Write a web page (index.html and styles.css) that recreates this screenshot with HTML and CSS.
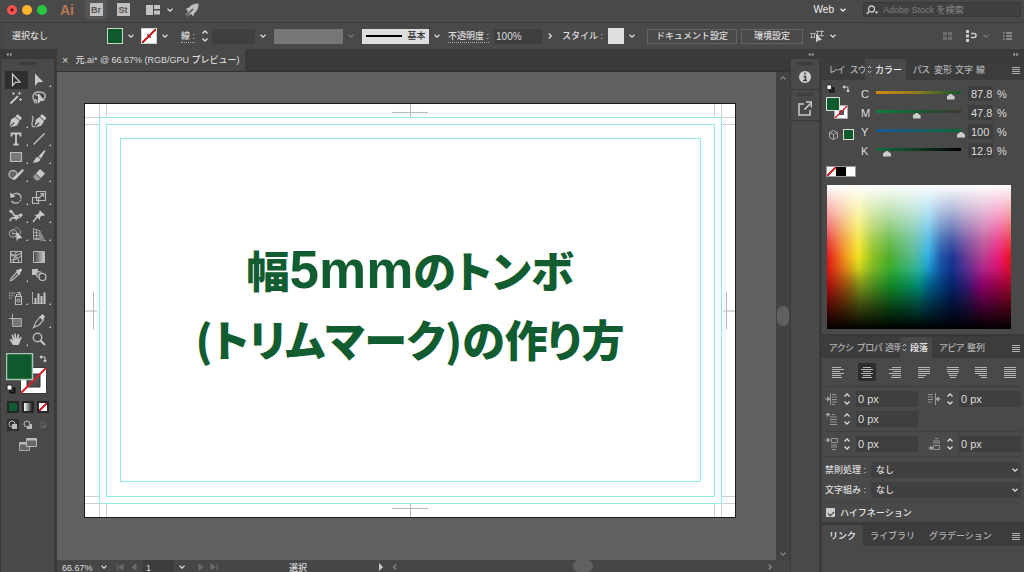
FILE: index.html
```html
<!DOCTYPE html>
<html lang="ja">
<head>
<meta charset="utf-8">
<title>元.ai</title>
<meta name="viewport" content="width=device-width">
<link rel="stylesheet" href="styles.css">
</head>
<body>
<svg class="sprite" aria-hidden="true">
  <symbol id="down" viewBox="0 0 8 8"><path d="M1.5 2.7 4 5.2l2.500-2.500" fill="none" stroke="currentColor" stroke-width="1.300"/></symbol>
  <symbol id="right" viewBox="0 0 8 8"><path d="M2.800 1.500 5.300 4 2.800 6.500" fill="none" stroke="currentColor" stroke-width="1.300"/></symbol>
  <symbol id="updown" viewBox="0 0 8 14"><path d="M1.500 4.500 4 2l2.500 2.500M1.500 9.500 4 12l2.500-2.500" fill="none" stroke="currentColor" stroke-width="1.300"/></symbol>
  <symbol id="menu" viewBox="0 0 8 8"><path d="M0 1.500h8M0 3.500h8M0 5.500h8M0 7.500h8" stroke="currentColor"/></symbol>
  <symbol id="swap" viewBox="0 0 10 10"><path d="M2.500 2.500h4q1 0 1 1v4" fill="none" stroke="currentColor" stroke-width="1.200"/><path d="M3.500 0v5L.5 2.500zM5 6.500h5L7.500 9.500z" fill="currentColor"/></symbol>
  <symbol id="default" viewBox="0 0 10 10"><path d="M4.500 4.500h4v4h-4z" fill="none" stroke="#111" stroke-width="2"/><path d="M1 1h5v5H1z" fill="#fff" stroke="#222"/></symbol>
</svg>

<div class="app">
  <header class="titlebar">
    <div class="lights"><i class="light red"></i><i class="light yellow"></i><i class="light green"></i></div>
    <span class="logo">Ai</span>
    <button class="bridge active">Br</button>
    <button class="bridge">St</button>
    <button class="icon arrange" aria-label="ドキュメントの配置"><svg width="14" height="10" viewBox="0 0 14 10"><path d="M0 0h7v10H0zM8 0h6v4H8zM8 5.500h6v4H8z" fill="#c4c4c4"/></svg><svg class="chev"><use href="#down"/></svg></button>
    <button class="icon" aria-label="GPU"><svg width="14" height="14" viewBox="0 0 14 14"><path d="M13.500.5C9 .5 6 2 4 4.500L.5 6 3 7.500 2 9l3 3 1.500-1L8 13.500 9.500 10c3-2 4-5 4-9.500z" fill="#bcbcbc"/><path d="M1 13 8 6" stroke="#494949" stroke-width="1.200"/><path d="m.5 12 2-2M2 13.500l2-2" stroke="#bcbcbc"/></svg></button>
    <div class="title-right">
      <button class="workspace">Web <svg class="chev"><use href="#down"/></svg></button>
      <label class="search"><svg width="13" height="10" viewBox="0 0 13 10"><circle cx="5.500" cy="4" r="3" fill="none" stroke="#ccc" stroke-width="1.300"/><path d="M3.500 6.200 .8 9" stroke="#ccc" stroke-width="1.500"/><path d="M8.500 6.500h4L10.500 8.800z" fill="#ccc"/></svg><input type="text" placeholder="Adobe Stock を検索" aria-label="Adobe Stock を検索"></label>
    </div>
  </header>

  <div class="control">
    <span class="selection">選択なし</span>
    <div class="pair fill-pair"><button class="swatch solid" aria-label="塗り"></button><button class="drop" aria-label="塗りメニュー"><svg class="chev"><use href="#down"/></svg></button></div>
    <div class="pair"><button class="swatch none" aria-label="線の色"></button><button class="drop" aria-label="線メニュー"><svg class="chev"><use href="#down"/></svg></button></div>
    <div class="pair stroke-pair"><label class="underlined" for="stroke">線 :</label><button class="step" aria-label="増減"><svg width="8" height="14"><use href="#updown"/></svg></button><input class="field" id="stroke" type="text"><button class="drop" aria-label="線幅"><svg class="chev"><use href="#down"/></svg></button></div>
    <div class="pair dim"><span class="profile"></span><button class="drop" disabled aria-label="プロファイル"><svg class="chev"><use href="#down"/></svg></button></div>
    <div class="pair"><button class="brush"><i></i>基本</button><button class="drop" aria-label="ブラシ"><svg class="chev"><use href="#down"/></svg></button></div>
    <div class="pair opacity"><label class="underlined" for="opacity">不透明度 :</label><input class="field" id="opacity" type="text" value="100%"><button class="drop" aria-label="不透明度を変更"><svg class="chev"><use href="#right"/></svg></button></div>
    <div class="pair style-pair"><span>スタイル :</span><button class="swatch pale" aria-label="スタイル"></button><button class="drop" aria-label="スタイルメニュー"><svg class="chev"><use href="#down"/></svg></button></div>
    <div class="pair buttons"><button class="outlined">ドキュメント設定</button><button class="outlined">環境設定</button></div>
    <button class="icon" aria-label="類似オブジェクト"><svg width="14" height="13" viewBox="0 0 14 13"><path d="M1.500 3.500h3v4h-3zM7.500 1.500h4v4h-4zM0 3.500h6M0 7.500h5M6 1.500h8M6 5.500h8M7.500 0v5M11.500 0v7" fill="none" stroke="#aaa"/><path d="M6 3.500v9l2.200-2L12 10z" fill="#ccc"/></svg><svg class="chev"><use href="#down"/></svg></button>
    <div class="control-right">
      <svg width="9" height="8" viewBox="0 0 9 8"><path d="M0 0h4v3.500H0zM5 0h4v3.500H5zM0 4.500h4V8H0zM5 4.500h4V8H5z" fill="#6c6c6c"/></svg>
      <button class="icon" aria-label="整列"><svg width="12" height="12" viewBox="0 0 12 12"><path d="M1 0h3v3H1zM1 4.500h3v3H1zM1 9h3v3H1z" fill="#ccc"/><path d="M6 3.500h3q2 0 2 2t-2 2H6" fill="none" stroke="#ccc" stroke-width="1.500"/></svg><svg class="chev faint"><use href="#down"/></svg></button>
      <button class="icon" aria-label="コントロールメニュー"><svg width="9" height="8" viewBox="0 0 9 8"><path d="M0 1h1.500M3 1h6M0 4h1.500M3 4h6M0 7h1.500M3 7h6" stroke="#c4c4c4" stroke-width="1.200"/></svg></button>
    </div>
  </div>

  <main class="workspace-body">
    <aside class="toolcol">
      <div class="collapse"><svg width="6" height="5" viewBox="0 0 6 5"><path d="M2.500.5v4L.5 2.500zM5.500.5v4l-2-2z" fill="#aaa"/></svg></div>
      <div class="toolpanel">
        <i class="grip"></i>
        <div class="toolgroup">
          <button class="tool on" aria-label="選択"><svg viewBox="0 0 18 18"><path d="M5.500 3v11.500l3-3.200 4.500-.3z" fill="none" stroke="#d0d0d0" stroke-width="1.200"/></svg></button>
          <button class="tool more" aria-label="ダイレクト選択"><svg viewBox="0 0 18 18"><path d="M5 2.500V15l3.200-3.700 5-.3z" fill="#c8c8c8"/></svg></button>
          <button class="tool" aria-label="自動選択"><svg viewBox="0 0 18 18"><path d="M3.500 14.500 11 7" stroke="#c8c8c8" stroke-width="2"/><path d="M12.500 2.500v3.500M10.800 4.200h3.500M6.500 3v3M5 4.500h3M13.500 9v3M12 10.500h3" stroke="#b4b4b4"/></svg></button>
          <button class="tool" aria-label="なげなわ"><svg viewBox="0 0 18 18"><path d="M5.500 12C1.500 10 2 3 9 3c6.500 0 7.500 4 5 7M5 13.500c-2-1.500 0-3.500 1.500-2.500s-.5 3-1 3.500M5.500 6h5" fill="none" stroke="#b8b8b8" stroke-width="1.400"/><path d="M8 4.500v10.500l2.500-3 4.500-.5z" fill="#ccc"/></svg></button>
        </div>
        <div class="toolgroup">
          <button class="tool more" aria-label="ペン"><svg viewBox="0 0 18 18"><path d="m10.500 2 4.500 4-2 2.500-4.500-4zM8 5l4.500 4-2.500 4.500L3 15.500 7.500 11l-1-.8L2.500 14.500 4 7.500z" fill="#c8c8c8"/></svg></button>
          <button class="tool" aria-label="曲線"><svg viewBox="0 0 18 18"><path d="m12 2 4.500 4-2 2.500-4.500-4zM9.500 5l4.500 4-2.500 4.500-6 2L9.500 11l-1-.8L4.500 14 6 7.500z" fill="#c8c8c8"/><path d="M2 4c3 3-1 6 0 9 .5 2 2 2 3.500 1.500" fill="none" stroke="#b8b8b8" stroke-width="1.200"/></svg></button>
          <button class="tool more" aria-label="文字"><svg viewBox="0 0 18 18"><path d="M4.500 6.500v-3h9v3M9 3.500v11M6.500 14.500h5" fill="none" stroke="#c8c8c8" stroke-width="1.800"/></svg></button>
          <button class="tool more" aria-label="直線"><svg viewBox="0 0 18 18"><path d="m3.500 14.500 11-11" stroke="#c8c8c8" stroke-width="1.300"/></svg></button>
          <button class="tool more" aria-label="長方形"><svg viewBox="0 0 18 18"><path d="M3.500 4.500h11v9h-11z" fill="#777" stroke="#b8b8b8" stroke-width="1.200"/></svg></button>
          <button class="tool more" aria-label="ブラシ"><svg viewBox="0 0 18 18"><path d="m14.500 2 1 1L11 10.500 8.500 8.500zM8 9l2.500 2.300C9 15 5 14.500 2.500 14.800 5 13 4.500 9.500 8 9z" fill="#c8c8c8"/></svg></button>
          <button class="tool more" aria-label="Shaper"><svg viewBox="0 0 18 18"><circle cx="6" cy="8.500" r="4" fill="#666" stroke="#b0b0b0" stroke-width="1.400"/><path d="m15.500 3 1.500 1.500-8 8.500-3.500 1.500L7 11z" fill="#ccc"/></svg></button>
          <button class="tool more" aria-label="消しゴム"><svg viewBox="0 0 18 18"><path d="m10 3 5 4.500-4 4.500-5-4.500z" fill="#c8c8c8"/><path d="m5.500 8 5 4.500-2 2H6L3.500 12v-2z" fill="#999"/></svg></button>
        </div>
        <div class="toolgroup">
          <button class="tool more" aria-label="回転"><svg viewBox="0 0 18 18"><path d="M5 7c2-4 9-3.500 9 2 0 5-6.500 7-9.500 3" fill="none" stroke="#b8b8b8" stroke-width="1.400" stroke-dasharray="13 1 2 1"/><path d="M3 3.500 3.500 9l5-1.500z" fill="#c8c8c8"/></svg></button>
          <button class="tool more" aria-label="拡大・縮小"><svg viewBox="0 0 18 18"><path d="M6.500 2.500h9v9h-9zM2.500 8.500h6v6h-6zM9 9l4-4M10 4.500h3.500V8" fill="none" stroke="#b8b8b8" stroke-width="1.200"/></svg></button>
          <button class="tool more" aria-label="線幅"><svg viewBox="0 0 18 18"><path d="M2.500 5C7 3 5 9 9 9s4-2 6-1M3 14c1-6 5-1 8-4" fill="none" stroke="#b8b8b8" stroke-width="2"/><path d="M7 7.500 9 14l1.500-2.500 3.500-.5zM2 3h3v3zM13 6l3 2-3 3z" fill="#c8c8c8"/></svg></button>
          <button class="tool more" aria-label="ピン"><svg viewBox="0 0 18 18"><path d="m9.500 3 5.500 5-1.500 1-1.500-.5-2 2v2.500L4.500 8 7 7.800l2.300-2z" fill="#c8c8c8"/><path d="m7 10-4 5" stroke="#c8c8c8" stroke-width="1.500"/></svg></button>
          <button class="tool more" aria-label="シェイプ形成"><svg viewBox="0 0 18 18"><circle cx="6" cy="8.500" r="3.800" fill="none" stroke="#aaa"/><circle cx="9.500" cy="7" r="4.200" fill="none" stroke="#aaa" stroke-dasharray="2 1"/><path d="M5 8.500h7" stroke="#aaa"/><path d="M9.500 7v9l2-2.500 4-.5z" fill="#ccc"/></svg></button>
          <button class="tool more" aria-label="遠近グリッド"><svg viewBox="0 0 18 18"><path d="M3.500 3v11L16 15.500" fill="none" stroke="#aaa"/><path d="M3 3.500 10 6v7l-6.500 1M3.500 7 10 8.500M3.500 10.500H10M6.500 4v9.500" fill="none" stroke="#aaa"/><path d="M10 6v8.500h5z" fill="#888"/></svg></button>
        </div>
        <div class="toolgroup">
          <button class="tool" aria-label="メッシュ"><svg viewBox="0 0 18 18"><path d="M3.500 3.500h11v11h-11zM3.500 7q4 3 6-3.500M3.500 12q7 0 11-5M7 14.500Q5 8 14.500 5M12 14.500q-1-6-8-9" fill="none" stroke="#b8b8b8" stroke-width="1.100"/></svg></button>
          <button class="tool" aria-label="グラデーション"><svg viewBox="0 0 18 18"><defs><linearGradient id="gr"><stop stop-color="#444"/><stop offset="1" stop-color="#ccc"/></linearGradient></defs><path d="M3.500 3.500h11v11h-11z" fill="url(#gr)" stroke="#b8b8b8"/></svg></button>
          <button class="tool more" aria-label="スポイト"><svg viewBox="0 0 18 18"><path d="m10 6-6 6.500-.5 2 2-.5L12 8z" fill="none" stroke="#b8b8b8" stroke-width="1.300"/><path d="m9 4.500 1-1 1.200.8L13 2.500q2-.5 2 2l-2 2 .7 1.200-1 1z" fill="#ccc"/></svg></button>
          <button class="tool" aria-label="ブレンド"><svg viewBox="0 0 18 18"><path d="M2 3h6v6H2z" fill="#c0c0c0"/><circle cx="9" cy="8.500" r="3" fill="#777" stroke="#b0b0b0"/><circle cx="12.500" cy="11" r="3.500" fill="#4a4a4a" stroke="#c0c0c0" stroke-width="1.200"/></svg></button>
        </div>
        <div class="toolgroup">
          <button class="tool more" aria-label="シンボルスプレー"><svg viewBox="0 0 18 18"><path d="M8.500 7.500h6v8h-6zM9.500 5.500h4v2h-4zM10 3.500h3v2" fill="none" stroke="#b8b8b8" stroke-width="1.200"/><circle cx="11.500" cy="11.500" r="1.500" fill="none" stroke="#ccc"/><path d="M2 4h6M2 6.500h5M2 9h3" stroke="#aaa" stroke-width="1.500" stroke-dasharray="1.300 1"/></svg></button>
          <button class="tool more" aria-label="グラフ"><svg viewBox="0 0 18 18"><path d="M2.500 3v11.500h13" fill="none" stroke="#aaa"/><path d="M4.500 9h2v5.500h-2zM7.500 4.500h2v10h-2zM10.500 7h2v7.500h-2zM13.500 3.500h2v11h-2z" fill="#c4c4c4"/></svg></button>
        </div>
        <div class="toolgroup">
          <button class="tool" aria-label="アートボード"><svg viewBox="0 0 18 18"><path d="M5.500 6.500h9v8h-9z" fill="#777" stroke="#aaa"/><path d="M5.500 2v8M2 6.500h8" stroke="#b8b8b8"/></svg></button>
          <button class="tool more" aria-label="スライス"><svg viewBox="0 0 18 18"><path d="m10 5 3.500 3L9 13l-5.500 2.500L6 10z" fill="none" stroke="#b8b8b8" stroke-width="1.200"/><path d="m12.500 2 2.500 2.500-2 3.500L9.500 5z" fill="#c8c8c8"/></svg></button>
          <button class="tool more" aria-label="手のひら"><svg viewBox="0 0 18 18"><path d="M6 15 2.500 9.500 4 9l2 2L4.500 5l1.300-.5L7.500 9 7.300 3.500h1.500L9.500 9l1.300-5 1.400.3L11.500 9.500l2.300-3 1 .8L12.500 13l-1 2z" fill="#c8c8c8"/></svg></button>
          <button class="tool" aria-label="ズーム"><svg viewBox="0 0 18 18"><circle cx="7.500" cy="7.500" r="4.200" fill="none" stroke="#b8b8b8" stroke-width="1.500"/><path d="m10.500 10.500 4.500 4.500" stroke="#c8c8c8" stroke-width="2"/></svg></button>
        </div>
        <svg class="fillstroke" width="44" height="42" viewBox="0 0 44 42"><path d="M14.500 14.500h26v26h-26z" fill="#fff" stroke="#3a3a3a"/><path d="M21 21h13v13H21z" fill="#505050" stroke="#333"/><path d="m15 40 25-25" stroke="#d5222a" stroke-width="2"/><path d="M.5.500h26v26H.5z" fill="#0f5a2d" stroke="#a9c4b0" stroke-width="1.500"/><use href="#swap" x="33" y="2" width="8" height="8"/><use href="#default" x="0" y="31" width="10" height="10"/></svg>
        <div class="modes"><button class="mode solid" aria-label="カラー"></button><button class="mode grad" aria-label="グラデーション"></button><button class="mode none" aria-label="なし"></button></div>
        <div class="modes draw">
          <button class="drawmode on" aria-label="標準描画"><svg viewBox="0 0 12 12"><circle cx="5" cy="5" r="3" fill="none" stroke="#bbb"/><path d="M5 5h5v5H5z" fill="#bbb"/></svg></button>
          <button class="drawmode" aria-label="背面描画"><svg viewBox="0 0 12 12"><path d="M5 5h5v5H5z" fill="#bbb"/><circle cx="5" cy="5" r="3" fill="#494949" stroke="#bbb"/></svg></button>
          <button class="drawmode" disabled aria-label="内側描画"><svg viewBox="0 0 12 12"><circle cx="6" cy="6" r="3" fill="none" stroke="#666"/><path d="M6 6h2v2H6z" fill="#666"/></svg></button>
        </div>
        <button class="screen" aria-label="スクリーンモード"><svg width="18" height="13" viewBox="0 0 18 13"><path d="M.5 4.500h10v8H.5z" fill="#666" stroke="#aaa"/><path d="M7.500.500h10v8h-10z" fill="#666" stroke="#bbb"/><path d="M7.500 1.500h10M.5 5.500h7" stroke="#bbb" stroke-width="2"/></svg></button>
      </div>
    </aside>

    <section class="document">
      <div class="doctabs"><div class="doctab"><button class="close" aria-label="閉じる">×</button><span>元.ai* @ 66.67% (RGB/GPU プレビュー)</span></div></div>
      <div class="canvasrow">
        <div class="canvas">
          <div class="artboard">
            <svg class="guides" viewBox="0 0 650 414" preserveAspectRatio="none" shape-rendering="crispEdges">
              <path d="M0 13.500h14M0 20.500h14M14.500 0v13M21.500 0v13M637 13.500h14M637 20.500h14M629.500 0v13M636.500 0v13M0 393.500h14M0 400.500h14M14.500 401v14M21.500 401v14M637 393.500h14M637 400.500h14M629.500 401v14M636.500 401v14" stroke="#cfcfcf"/>
              <path d="M307 8.500h36M325.500 0v13M307 405.500h36M325.500 401v14M8.500 188v38M0 207.500h12M641.500 188v38M638 207.500h12" stroke="#b9b9b9"/>
              <path d="M14.500 13.500h622v387h-622zM21.500 20.500h608v373h-608zM35.500 34.500h580v344h-580z" fill="none" stroke="#8ee8e4"/>
            </svg>
            <h1 class="headline">幅<span class="latin">5mm</span>のトンボ<br>(トリムマーク)の作り方</h1>
          </div>
        </div>
        <div class="vscroll"><svg class="chev"><use href="#down" transform="rotate(180 4 4)"/></svg><i></i><svg class="chev"><use href="#down"/></svg></div>
      </div>
      <footer class="status">
        <input class="zoom" type="text" value="66.67%" aria-label="ズーム">
        <button class="drop" aria-label="ズームメニュー"><svg class="chev"><use href="#down"/></svg></button>
        <svg class="pager" width="22" height="8" viewBox="0 0 22 8"><path d="M1.500 1v6M7 1v6L3 4zM20 1v6l-4-3z" stroke="#6a6a6a" fill="#6a6a6a"/></svg>
        <input class="page" type="text" value="1" aria-label="アートボード番号">
        <button class="drop" aria-label="アートボードメニュー"><svg class="chev"><use href="#down"/></svg></button>
        <svg width="22" height="8" viewBox="0 0 22 8"><path d="M2 1v6l4-3zM14 1v6l4-3zM20 1v6" stroke="#6a6a6a" fill="#6a6a6a"/></svg>
        <span class="mode-name">選択</span>
        <svg width="8" height="8" viewBox="0 0 8 8"><path d="M2 0v8l4-4z" fill="#ccc"/></svg>
        <div class="hscroll"><svg class="chev"><use href="#right" transform="rotate(180 4 4)"/></svg><i></i><svg class="chev"><use href="#right"/></svg></div>
      </footer>
    </section>

    <aside class="dock">
      <div class="collapse end"><svg width="6" height="5" viewBox="0 0 6 5"><path d="M2.500.5v4L.5 2.500zM5.500.5v4l-2-2z" fill="#aaa"/></svg></div>
      <button class="dockitem" aria-label="情報"><i class="grip"></i><svg width="14" height="14" viewBox="0 0 14 14"><circle cx="7" cy="7" r="6" fill="#d0d0d0"/><path d="M7 2.500v2M5.500 6.500h2V10M5 10.500h4" fill="none" stroke="#444" stroke-width="1.600"/></svg></button>
      <button class="dockitem" aria-label="書き出し"><i class="grip"></i><svg width="14" height="15" viewBox="0 0 14 15"><path d="M6 3H1v11h11V9" fill="none" stroke="#ccc" stroke-width="1.500"/><path d="m6.500 8.500 6-6M8 1h5.500v5.500" fill="none" stroke="#ccc" stroke-width="1.600"/></svg></button>
    </aside>

    <aside class="panels">
      <div class="collapse end"><svg width="6" height="5" viewBox="0 0 6 5"><path d="M.5.500v4l2-2zM3.500.500v4l2-2z" fill="#aaa"/></svg></div>
      <section class="panel colors">
        <div class="tabs">
          <button class="tab short">レイ</button><button class="tab short">スウ</button><button class="tab current"><svg width="5" height="9"><use href="#updown"/></svg>カラー</button><button class="tab short">パス</button><button class="tab short">変形</button><button class="tab short">文字</button><button class="tab">線</button>
          <button class="panelmenu" aria-label="メニュー"><svg width="8" height="8"><use href="#menu"/></svg></button>
        </div>
        <div class="color">
          <div class="colorside">
            <div class="minirow"><svg width="9" height="9"><use href="#default"/></svg><svg width="8" height="8"><use href="#swap"/></svg></div>
            <svg width="22" height="22" viewBox="0 0 22 22"><path d="M8.500 8.500h13v13h-13z" fill="#fff" stroke="#aaa"/><path d="M13 13h5v5h-5z" fill="#555"/><path d="M9 21 21 9" stroke="#d5222a" stroke-width="1.500"/><path d="M.5.500h13v13H.5z" fill="#0f5a2d" stroke="#d8e4dc"/></svg>
            <div class="minirow web"><svg width="9" height="10" viewBox="0 0 9 10"><path d="M4.500.6 8.500 2.500v5l-4 2-4-2v-5zM.5 2.500l4 2 4-2M4.500 4.500v5" fill="none" stroke="#aaa"/></svg><i class="chip"></i></div>
          </div>
          <div class="sliders">
            <label for="c">C</label><input id="c" class="range cyan" type="range" max="100" step="0.1" value="87.8"><input class="num" type="text" value="87.8" aria-label="C 値"><span>%</span>
            <label for="m">M</label><input id="m" class="range magenta" type="range" max="100" step="0.1" value="47.8"><input class="num" type="text" value="47.8" aria-label="M 値"><span>%</span>
            <label for="y">Y</label><input id="y" class="range yellow-ink" type="range" max="100" step="0.1" value="100"><input class="num" type="text" value="100" aria-label="Y 値"><span>%</span>
            <label for="k">K</label><input id="k" class="range black" type="range" max="100" step="0.1" value="12.9"><input class="num" type="text" value="12.9" aria-label="K 値"><span>%</span>
          </div>
        </div>
        <div class="quick"><i class="none"></i><i class="blk"></i><i class="wht"></i></div>
        <div class="spectrum"></div>
      </section>

      <section class="panel">
        <div class="tabs">
          <button class="tab long">アクシ</button><button class="tab long">プロパ</button><button class="tab short">透明</button><button class="tab current"><svg width="5" height="9"><use href="#updown"/></svg>段落</button><button class="tab long">アピア</button><button class="tab">整列</button>
          <button class="panelmenu" aria-label="メニュー"><svg width="8" height="8"><use href="#menu"/></svg></button>
        </div>
        <div class="aligns">
          <button aria-label="左揃え"><svg viewBox="0 0 12 11"><path d="M0 .5h9M0 2.500h12M0 4.500h8M0 6.500h12M0 8.500h9M0 10.500h10"/></svg></button>
          <button class="on" aria-label="中央揃え"><svg viewBox="0 0 12 11"><path d="M2 .5h8M0 2.500h12M2 4.500h8M0 6.500h12M2 8.500h8M1 10.500h10"/></svg></button>
          <button aria-label="右揃え"><svg viewBox="0 0 12 11"><path d="M3 .5h9M0 2.500h12M4 4.500h8M0 6.500h12M3 8.500h9M2 10.500h10"/></svg></button>
          <button aria-label="均等配置（最終行左揃え）"><svg viewBox="0 0 12 11"><path d="M0 .5h12M0 2.500h12M0 4.500h12M0 6.500h12M0 8.500h8M0 10.500h6"/></svg></button>
          <button aria-label="均等配置（最終行中央揃え）"><svg viewBox="0 0 12 11"><path d="M0 .5h12M0 2.500h12M0 4.500h12M1 6.500h10M2 8.500h8M3 10.500h6"/></svg></button>
          <button aria-label="均等配置（最終行右揃え）"><svg viewBox="0 0 12 11"><path d="M0 .5h12M0 2.500h12M0 4.500h12M0 6.500h12M4 8.500h8M6 10.500h6"/></svg></button>
          <button aria-label="両端揃え"><svg viewBox="0 0 12 11"><path d="M0 .5h12M0 2.500h12M0 4.500h12M0 6.500h12M0 8.500h12M0 10.500h12"/></svg></button>
        </div>
        <div class="indents">
          <div class="indent"><svg viewBox="0 0 13 12"><path d="M0 6h4M5.500 0v12M7 1.500h4M7 4h5M7 6.500h5M7 9h5M7 11.500h3"/><path d="M2.500 4v4L5 6z"/></svg><button class="step" aria-label="増減"><svg width="8" height="14"><use href="#updown"/></svg></button><input type="text" value="0 px" aria-label="左インデント"></div>
          <div class="indent"><svg viewBox="0 0 13 12"><path d="M0 1.500h5M0 4h5M0 6.500h5M0 9h4M7.500 0v12M9 6h4"/><path d="M10.500 4v4L8 6z"/></svg><button class="step" aria-label="増減"><svg width="8" height="14"><use href="#updown"/></svg></button><input type="text" value="0 px" aria-label="右インデント"></div>
          <div class="indent"><svg viewBox="0 0 13 12"><path d="M0 1.500h4M7 1.500h3M5 4h7M5 6.500h7M5 9h7M5 11.500h7"/><path d="M2.500 0v3.500L5 1.500z"/></svg><button class="step" aria-label="増減"><svg width="8" height="14"><use href="#updown"/></svg></button><input type="text" value="0 px" aria-label="1行目インデント"></div>
        </div>
        <div class="indents">
          <div class="indent"><svg viewBox="0 0 13 12"><path d="M0 2h4M6.500.500h6v4h-6zM6 7h6M6 9h6M7 11.500h4" fill="none"/><path d="M2.500 0v4L5 2z"/></svg><button class="step" aria-label="増減"><svg width="8" height="14"><use href="#updown"/></svg></button><input type="text" value="0 px" aria-label="段落前のアキ"></div>
          <div class="indent"><svg viewBox="0 0 13 12"><path d="M7 .5h3M5 3h7M5 5h7M5.500 7.500h6v4h-6zM0 10h4" fill="none"/><path d="M2.500 8v4L5 10z"/></svg><button class="step" aria-label="増減"><svg width="8" height="14"><use href="#updown"/></svg></button><input type="text" value="0 px" aria-label="段落後のアキ"></div>
        </div>
        <div class="rules">
          <label for="kinsoku">禁則処理 :</label><div class="selectbox"><select id="kinsoku"><option>なし</option></select><svg class="chev"><use href="#down"/></svg></div>
          <label for="kumi">文字組み :</label><div class="selectbox"><select id="kumi"><option>なし</option></select><svg class="chev"><use href="#down"/></svg></div>
        </div>
        <label class="hyphen"><input type="checkbox" checked>ハイフネーション</label>
      </section>

      <section class="panel last">
        <div class="tabs roomy">
          <button class="tab current">リンク</button><button class="tab">ライブラリ</button><button class="tab">グラデーション</button>
          <button class="panelmenu" aria-label="メニュー"><svg width="8" height="8"><use href="#menu"/></svg></button>
        </div>
      </section>
    </aside>
  </main>
</div>
</body>
</html>
```
FILE: styles.css
```css
* { box-sizing: border-box; }

body {
  margin: 0;
  background: #494949;
  color: #dcdcdc;
  font: 500 9px/12px "Liberation Sans", "Noto Sans CJK JP", sans-serif;
}

button, input, select {
  margin: 0;
  padding: 0;
  border: 0;
  border-radius: 0;
  background: none;
  color: inherit;
  font: inherit;
  min-width: 0;
}

button { display: flex; align-items: center; justify-content: center; }
svg { display: block; flex: none; }
i { display: block; }

.sprite { position: absolute; width: 0; height: 0; }
.chev { width: 8px; height: 8px; }
.faint { opacity: 0.3; }

.app { display: flex; flex-direction: column; height: 100vh; overflow: hidden; }

/* Title bar */
.titlebar {
  display: flex;
  align-items: center;
  height: 23px;
  padding: 0 3px 3px 7px;
  border-bottom: 1px solid #3a3a3a;
}
.lights { display: flex; gap: 5px; }
.light { width: 10px; height: 10px; border-radius: 50%; }
.red { background: radial-gradient(circle, #5a0f0a 1px, #f4534c 2px); }
.yellow { background: #fbb52c; }
.green { background: #29c53f; }
.logo { margin: 0 11px 0 13px; color: #bb7850; font: bold 14px/18px "Liberation Sans", sans-serif; }
.bridge {
  width: 22px;
  height: 19px;
  margin-right: 5px;
  color: #555;
  font-weight: bold;
  background: linear-gradient(#c0c0c0, #c0c0c0) center / 13px 13px no-repeat;
}
.bridge.active { background-color: #555; }
.icon { gap: 5px; }
.arrange { margin: 0 11px 0 7px; gap: 6px; }
.title-right { display: flex; align-items: center; gap: 16px; margin-left: auto; }
.workspace { gap: 5px; color: #eee; font-size: 10px; }
.search {
  display: flex;
  align-items: center;
  gap: 4px;
  width: 158px;
  height: 15px;
  padding-left: 2px;
  background: #404040;
  border: 1px solid #393939;
}
.search input { flex: 1; }
.search input::placeholder { color: #7d7d7d; }

/* Control bar */
.control {
  display: flex;
  align-items: center;
  height: 26px;
  padding: 0 12px 0 8px;
  border-left: 4px solid #474747;
  white-space: nowrap;
}
.selection { width: 95px; }
.pair { display: flex; align-items: center; margin-right: 4px; }
.drop { width: 15px; height: 15px; }
.dim .drop { opacity: 0.3; }
.swatch { width: 16px; height: 16px; border: 1px solid #c8d8cc; }
.solid { background: #0f5a2d; }
.swatch.none { background: linear-gradient(135deg, transparent 46%, #d5222a 46% 54%, transparent 54%), linear-gradient(#777, #777) center / 4px 4px no-repeat, #fff; }
.pale { background: #dedede; border-color: #dedede; }
.fill-pair { margin-right: 3px; }
.stroke-pair { margin: 0 4px 0 5px; }
.underlined { border-bottom: 1px dotted #aaa; }
.step { width: 12px; height: 15px; }
.stroke-pair .step { margin: 0 1px 0 4px; }
.field { width: 43px; height: 15px; padding-left: 2px; background: #3f3f3f; font-size: 10px; }
.profile { width: 69px; height: 15px; background: #777; }
.brush { gap: 6px; width: 67px; height: 15px; background: #dedede; color: #333; }
.brush i { width: 36px; height: 2px; background: #000; }
.opacity .field { width: 48px; margin-left: 5px; }
.style-pair { margin-left: 1px; }
.style-pair .swatch { margin-left: 5px; }
.buttons { gap: 4px; margin: 0 7px 0 4px; }
.outlined { height: 15px; padding: 0 8px; border: 1px solid #656565; }
.outlined + .outlined { padding: 0 12px; }
.control-right { display: flex; align-items: center; gap: 13px; margin-left: auto; }

/* Main area */
.workspace-body { flex: 1; display: flex; min-height: 0; background: #3a3a3a; }
.collapse { display: flex; align-items: center; flex: none; height: 10px; padding: 0 5px; }
.end { justify-content: flex-end; }
.grip { width: 16px; height: 3px; background: #3d3d3d; }

.toolcol { display: flex; flex-direction: column; width: 57px; padding: 0 3px 0 1px; }
.toolpanel { flex: 1; display: flex; flex-direction: column; align-items: center; padding: 3px 0; background: #494949; }
.toolpanel > .grip { margin-bottom: 6px; }
.toolgroup { display: grid; grid-template-columns: 23px 23px; margin-bottom: 5px; }
.tool { position: relative; width: 23px; height: 18px; }
.tool svg { width: 18px; height: 18px; }
.tool.on { background: #2f2f2f; }
.more::after {
  content: "";
  position: absolute;
  right: 0;
  bottom: 2px;
  border: 1px solid #ccc;
  border-left-color: transparent;
  border-top-color: transparent;
}
.fillstroke { margin: 0 0 6px; }
.modes { display: flex; gap: 3px; }
.mode { width: 12px; height: 12px; border: 2px solid #262626; }
.grad { background: linear-gradient(90deg, #fff, #222); }
.none { background: linear-gradient(135deg, transparent 42%, #d5222a 42% 58%, transparent 58%), #fff; }
.draw { margin: 6px 0 7px; }
.drawmode { width: 12px; height: 12px; }
.drawmode.on { background: #2f2f2f; }
.drawmode svg { width: 12px; height: 12px; }

/* Document window */
.document { flex: 1; display: flex; flex-direction: column; min-width: 0; }
.doctabs { display: flex; height: 22px; }
.doctab { display: flex; align-items: center; gap: 7px; padding: 0 5px; background: #494949; white-space: nowrap; }
.close { font-size: 11px; }
.canvasrow { flex: 1; display: flex; min-height: 0; border-top: 1px solid #333; }
.canvas { flex: 1; display: flex; padding: 31px 40px 42px 27px; background: #606060; }
.artboard { position: relative; flex: 1; display: grid; place-items: center; padding-bottom: 13px; background: #fff; border: 1px solid #1c1c1c; }
.guides { position: absolute; inset: 0; width: 100%; height: 100%; }
.headline {
  position: relative;
  margin: 0;
  color: #125c31;
  font: 900 43px/69px "Noto Sans CJK JP", sans-serif;
  font-feature-settings: "palt";
  text-align: center;
  white-space: nowrap;
}
.latin { font: bold 53px/60px "Liberation Sans", sans-serif; }
.vscroll { display: flex; flex-direction: column; align-items: center; justify-content: space-between; width: 14px; padding: 2px 0; background: #424242; color: #888; }
.vscroll i { width: 12px; height: 20px; border-radius: 6px; background: #606060; }
.status { display: flex; align-items: flex-start; height: 12px; padding-left: 5px; background: #464646; overflow: hidden; }
.status > * { flex: none; }
.status svg { margin-top: 3px; }
.status .drop { height: 14px; align-items: flex-start; }
.zoom { width: 33px; height: 16px; margin-right: 1px; font-size: 9px; }
.pager { margin-left: 5px; }
.page { width: 31px; height: 16px; margin-left: 5px; padding-left: 3px; background: #3d3d3d; }
.page + .drop { margin-right: 8px; }
.mode-name { width: 158px; padding-top: 2px; text-align: center; }
.status .hscroll { flex: 1; display: flex; justify-content: space-between; padding: 0 16px 0 6px; color: #888; }
.hscroll i { width: 20px; height: 12px; border-radius: 6px; background: #606060; }

/* Icon dock */
.dock { display: flex; flex-direction: column; width: 29px; margin-right: 3px; background: #494949; border-left: 1px solid #3a3a3a; }
.dock .collapse { background: #3a3a3a; }
.dockitem { flex-direction: column; justify-content: flex-start; gap: 5px; height: 31px; padding-top: 3px; border-bottom: 1px solid #383838; }

/* Panels */
.panels { display: flex; flex-direction: column; width: 202px; }
.panel { margin-bottom: 3px; background: #494949; }
.colors { padding-bottom: 5px; }
.last { flex: 1; margin: 0; }
.tabs { display: flex; height: 21px; background: #3c3c3c; color: #b0b0b0; }
.tab { justify-content: flex-start; padding: 0 0 0 7px; white-space: nowrap; }
.short, .long { width: 21px; font-feature-settings: "palt"; }
.long { width: 28px; }
.tab.current { gap: 3px; margin-left: 1px; padding: 0 4px 0 2px; background: #494949; color: #eee; }
.roomy .tab { padding: 0 7px; }
.roomy .tab.current { margin: 0; padding: 0 7px; }
.panelmenu { margin: 0 4px 0 auto; }

.color { display: flex; gap: 7px; padding: 4px 0 1px 4px; }
.colorside { display: flex; flex-direction: column; width: 28px; gap: 4px; }
.minirow { display: flex; align-items: center; gap: 7px; }
.web { gap: 5px; margin: 6px 0 0 3px; }
.chip { width: 11px; height: 11px; background: #0f5a2d; border: 1px solid #ddd; }
.sliders {
  display: grid;
  grid-template-columns: 8px minmax(0, 93px) 24px 12px;
  column-gap: 3px;
  grid-auto-rows: 19px;
  align-items: center;
  font-size: 11px;
}
.num { width: 25px; height: 15px; padding-left: 3px; background: #3e3e3e; }
.sliders span { padding-left: 2px; }
.range { appearance: none; width: 100%; height: 14px; }
.range::-webkit-slider-runnable-track {
  height: 12px;
  background: var(--ink) center top 3px / calc(100% - 8px) 3px no-repeat;
}
.range::-webkit-slider-thumb {
  appearance: none;
  width: 8px;
  height: 6px;
  margin-top: 6px;
  background: #ccc;
  clip-path: polygon(50% 0, 100% 50%, 100% 100%, 0 100%, 0 50%);
}
.cyan { --ink: linear-gradient(90deg, #d28a14, #8a7a1c 50%, #0f5a2d); }
.magenta { --ink: linear-gradient(90deg, #0a8040, #195a30 50%, #3e3530); }
.yellow-ink { --ink: linear-gradient(90deg, #155a9c, #15606c 50%, #0a6a35); }
.black { --ink: linear-gradient(90deg, #127040, #0f3a20 50%, #000); }

.quick { display: flex; width: 30px; margin: 5px 0 8px 4px; border: 1px solid #999; }
.quick i { flex: 1; height: 9px; }
.blk { background: #000; }
.wht { background: #fff; }

.spectrum {
  position: relative;
  height: 144px;
  margin: 0 13px 0 5px;
  background: linear-gradient(90deg, #e6141b 0, #f08c1e 9%, #f2e41e 17%, #8ebf22 25%, #4fae2c 34%, #55b894 47%, #30b0e2 55%, #1e55a8 62%, #1c3593 68%, #6b3a92 76%, #b5428f 85%, #ea1c7c 93%, #e8121d 100%);
}
.spectrum::before, .spectrum::after { content: ""; position: absolute; inset: 0; }
.spectrum::before {
  background: linear-gradient(90deg, #d01010 0, #b86010 10%, #98b020 18%, #16a62e 35%, #00a890 50%, #0070a8 56%, #062a80 68%, #40208a 76%, #a80080 84%, #c00830 100%);
  mask-image: linear-gradient(transparent 50%, #000 70%);
}
.spectrum::after { background: linear-gradient(#fff 0, rgb(255 255 255 / 0.6) 20%, rgb(255 255 255 / 0.2) 38%, rgb(255 255 255 / 0) 50%, rgb(0 0 0 / 0) 58%, rgb(0 0 0 / 0.2) 70%, rgb(0 0 0 / 0.6) 84%, #000 100%); }

.aligns { display: flex; justify-content: space-between; margin: 0 3px; padding: 5px 2px 5px 4px; border-bottom: 1px solid #404040; }
.aligns button { width: 18px; height: 18px; border-radius: 2px; }
.aligns .on { background: #2d2d2d; }
.aligns svg { width: 12px; height: 11px; stroke: #b4b4b4; }
.indents {
  display: grid;
  grid-template-columns: 1fr 1fr;
  gap: 4px 10px;
  margin: 0 3px;
  padding: 4px 0;
  border-bottom: 1px solid #404040;
}
.indent { display: flex; align-items: center; gap: 3px; }
.indent > svg { width: 13px; height: 12px; stroke: #a8a8a8; fill: #a8a8a8; stroke-width: 0.8; }
.indent input { flex: 1; width: 0; height: 16px; padding-left: 2px; background: #3f3f3f; font-size: 11px; }
.rules {
  display: grid;
  grid-template-columns: 43px 1fr;
  gap: 4px 3px;
  align-items: center;
  margin: 0 3px;
  padding: 5px 0 4px;
  border-bottom: 1px solid #404040;
  white-space: nowrap;
}
.selectbox { display: flex; align-items: center; height: 16px; padding-right: 2px; background: #404040; }
.selectbox select { appearance: none; flex: 1; height: 16px; padding-left: 5px; }
.hyphen { display: flex; align-items: center; gap: 5px; height: 19px; padding-left: 4px; color: #e4e4e4; }
.hyphen input { appearance: none; width: 9px; height: 9px; border-radius: 1px; background: #ccc; display: grid; place-items: center; }
.hyphen input:checked::before { content: ""; width: 5px; height: 3px; border: solid #333; border-width: 0 0 1px 1px; transform: rotate(-45deg); }
```
